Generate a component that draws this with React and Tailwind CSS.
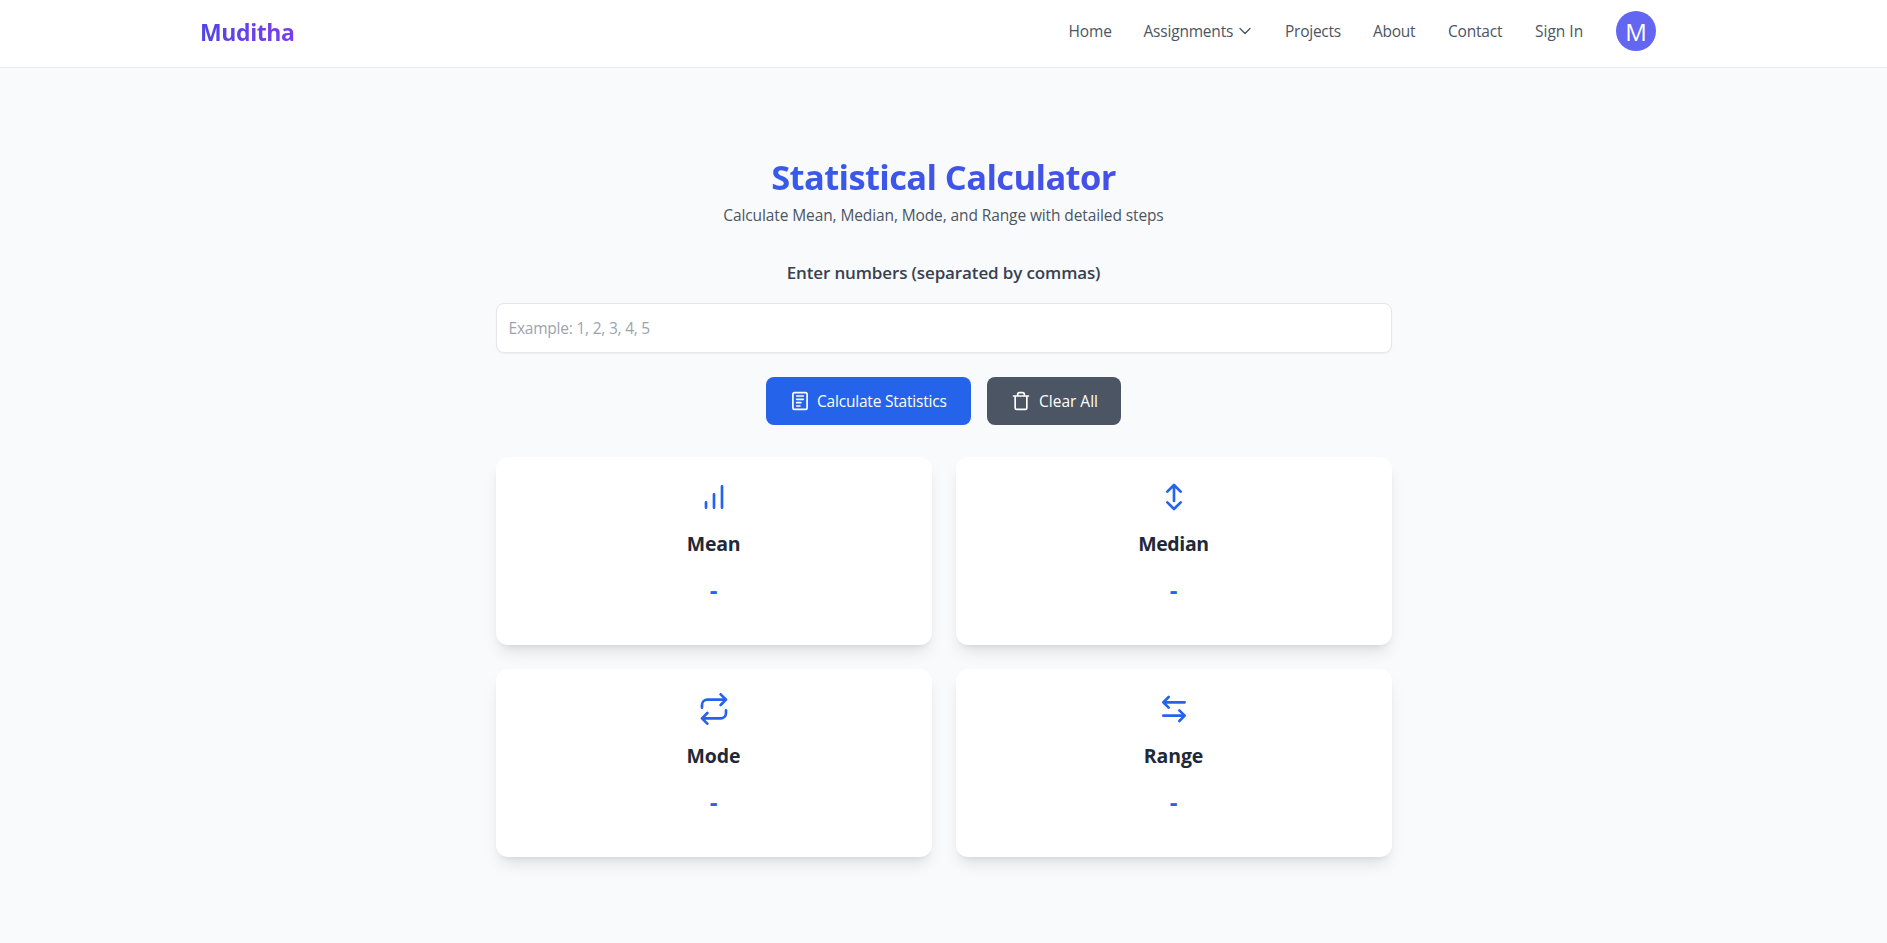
import React from "react";

function Icon({ className, children, strokeWidth = 2 }) {
  return (
    <svg
      className={className}
      viewBox="0 0 24 24"
      fill="none"
      stroke="currentColor"
      strokeWidth={strokeWidth}
      strokeLinecap="round"
      strokeLinejoin="round"
    >
      {children}
    </svg>
  );
}

const cards = [
  { title: "Mean", titleClass: "tracking-[-0.3px]", icon: <path d="M12 20V10M18 20V4M6 20v-4" /> },
  { title: "Median", titleClass: "tracking-[-0.36px]", icon: <path d="M7 8l5-5 5 5M12 3v12M7 16l5 5 5-5" /> },
  {
    title: "Mode",
    titleClass: "tracking-[-0.05px]",
    icon: <path d="M17 1l4 4-4 4M3 11V9a4 4 0 0 1 4-4h14M7 23l-4-4 4-4M21 13v2a4 4 0 0 1-4 4H3" />,
  },
  { title: "Range", titleClass: "tracking-[-0.15px]", icon: <path d="M20 7H4m4-4L4 7l4 4M4 17h16m-4-4l4 4-4 4" /> },
];

export default function App() {
  return (
    <div className="min-h-[943px] bg-[#f9fafb] font-['Open_Sans','Noto_Sans',sans-serif] text-[15.5px] leading-6 text-[#4b5563]">
      <header className="h-[68px] border-b border-[#ebecee] bg-white">
        <div className="ml-[200px] flex h-[62px] w-[1456px] items-center justify-between">
          <a className="bg-gradient-to-r from-[#4f46e5] to-[#7c3aed] bg-clip-text pt-0.5 text-[23px] leading-8 font-bold tracking-[-0.4px] text-transparent">
            Muditha
          </a>
          <nav className="flex items-center gap-8 whitespace-nowrap">
            <a className="w-[43px] tracking-[-0.15px]">Home</a>
            <a className="flex w-[109.5px] items-center justify-between tracking-[-0.2px]">
              Assignments
              <Icon className="size-4 shrink-0">
                <path d="M19.5 8.25l-7.5 7.5-7.5-7.5" />
              </Icon>
            </a>
            <a className="w-[56px] tracking-[-0.25px]">Projects</a>
            <a className="w-[43px] tracking-[-0.25px]">About</a>
            <a className="w-[55px] tracking-[-0.2px]">Contact</a>
            <a className="w-[49px]">Sign In</a>
            <span className="flex size-10 items-center justify-center rounded-full bg-[#6366f1] pt-0.5 text-2xl font-medium text-white">
              M
            </span>
          </nav>
        </div>
      </header>

      <main className="mx-auto flex w-[896px] flex-col items-center pt-[89px]">
        <h1 className="w-full bg-gradient-to-r from-[#2563eb] to-[#4f46e5] bg-clip-text text-center text-[34.5px] leading-10 font-bold tracking-[-0.62px] text-transparent">
          Statistical Calculator
        </h1>
        <p className="mt-1.5 tracking-[-0.11px]">Calculate Mean, Median, Mode, and Range with detailed steps</p>
        <label className="mt-8 text-[17px] leading-7 font-semibold tracking-[-0.13px] text-[#374151]">
          Enter numbers (separated by commas)
        </label>
        <input
          className="mt-4 h-[50px] w-full rounded-lg border border-[#e5e7eb] bg-white px-3 tracking-[-0.22px] shadow-xs placeholder:text-[#9ca3af]"
          placeholder="Example: 1, 2, 3, 4, 5"
        />
        <div className="mt-6 flex gap-4">
          <button className="flex h-12 w-[205px] items-center gap-[7px] rounded-lg bg-[#2563eb] px-6 tracking-[-0.2px] whitespace-nowrap text-white">
            <Icon className="size-5 shrink-0">
              <rect x="3.5" y="2" width="17" height="20" rx="2" />
              <path d="M8 6h8M8 10h8M8 14h5M8 18h4" />
            </Icon>
            Calculate Statistics
          </button>
          <button className="flex h-12 w-[134px] items-center gap-2 rounded-lg bg-[#4b5563] px-6 whitespace-nowrap text-white">
            <Icon className="size-5 shrink-0">
              <path d="M3 6h18M19 6v14a2 2 0 0 1-2 2H7a2 2 0 0 1-2-2V6M8 6V4a2 2 0 0 1 2-2h4a2 2 0 0 1 2 2v2" />
            </Icon>
            Clear All
          </button>
        </div>
        <div className="mt-8 grid w-full grid-cols-2 gap-6">
          {cards.map((c) => (
            <section key={c.title} className="flex h-[188px] flex-col items-center rounded-xl bg-white p-6 shadow-lg">
              <Icon className="size-8 text-[#2563eb]">{c.icon}</Icon>
              <h2 className={"mt-[17px] text-[19.5px] leading-7 font-bold text-[#1f2937] " + c.titleClass}>{c.title}</h2>
              <p className="mt-4 text-2xl leading-8 font-bold text-[#2563eb]">-</p>
            </section>
          ))}
        </div>
      </main>
    </div>
  );
}
